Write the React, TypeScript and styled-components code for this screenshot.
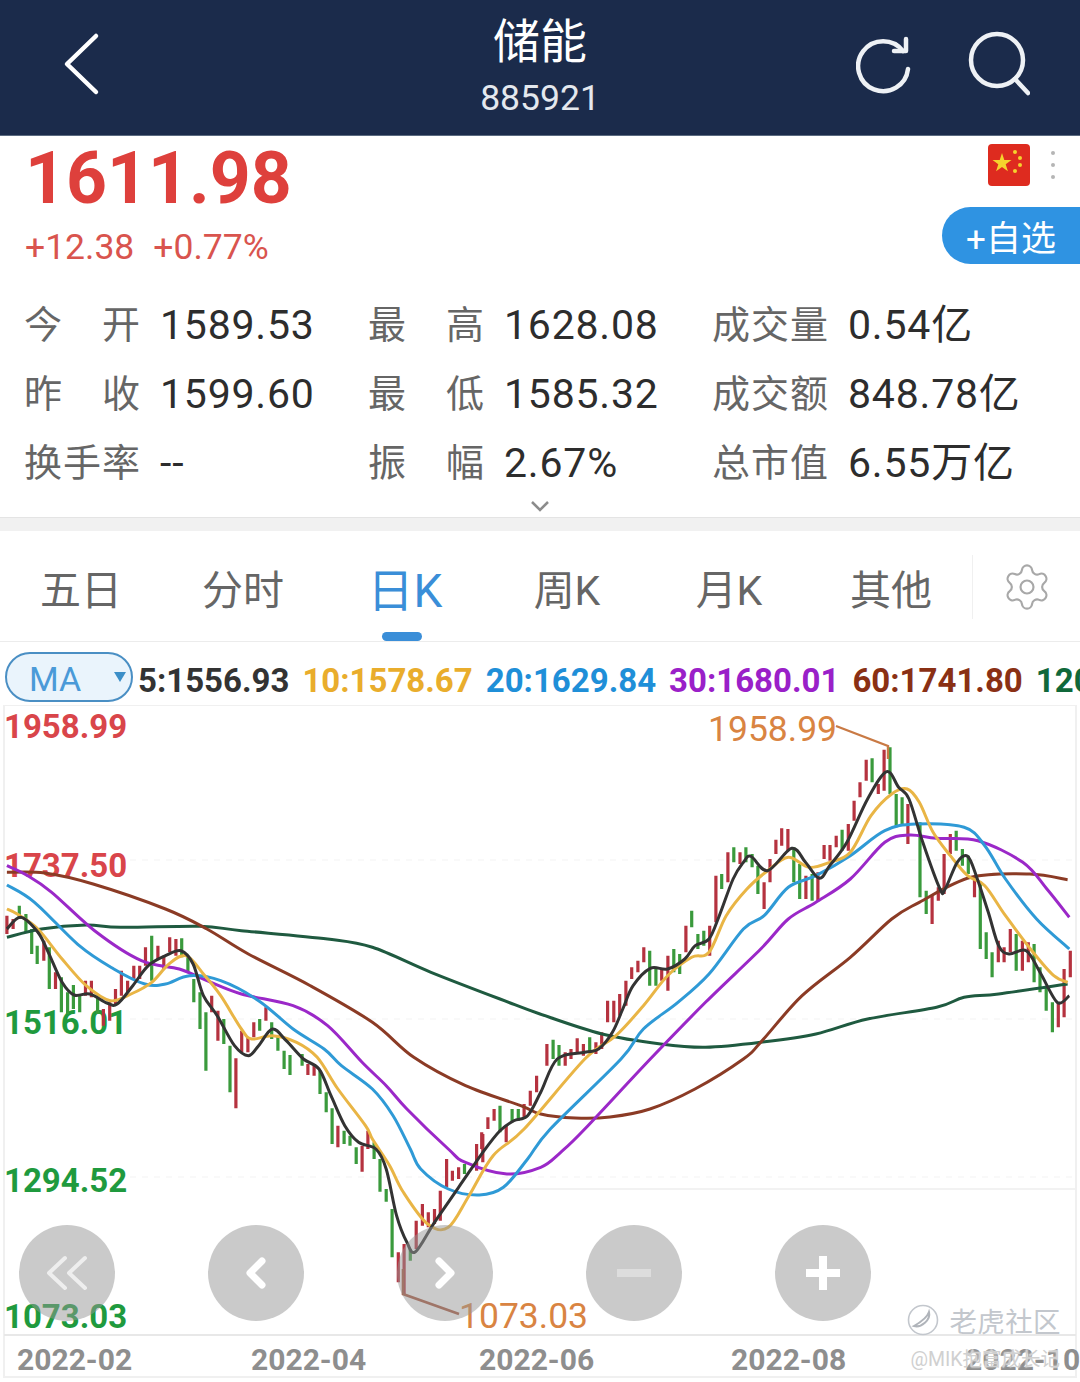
import React from 'react'
import styled, { createGlobalStyle } from 'styled-components'
import { Settings } from 'lucide-react'

const GlobalStyle = createGlobalStyle`
  html, body {
    margin: 0;
    padding: 0;
    background: #fff;
  }
  body {
    font-family: Roboto, "Noto Sans CJK SC", sans-serif;
  }
`

const Page = styled.div`
  width: 1080px;
  height: 1382px;
  overflow: hidden;
  display: flex;
  flex-direction: column;
  background: #fff;
`

const Header = styled.header`
  height: 136px;
  flex: none;
  background: #1b2b4b;
  border-bottom: 1px solid #5a6a80;
  box-sizing: border-box;
  display: grid;
  grid-template-columns: 1fr auto 1fr;
  align-items: center;
  padding: 0 50px 8px 60px;
  color: #fff;
`

const HeaderIcons = styled.div`
  display: flex;
  justify-content: flex-end;
  gap: 52px;
`

const TitleBlock = styled.div`
  align-self: start;
  text-align: center;
  margin-left: -10px;
  padding-top: 15px;
`

const Title = styled.div`
  font-size: 47px;
  line-height: 54px;
`

const Code = styled.div`
  font-size: 35.5px;
  line-height: 44px;
  margin-top: 7px;
  color: #e4e8ee;
`

const QuoteRow = styled.section`
  height: 134px;
  flex: none;
  display: flex;
  justify-content: space-between;
  box-sizing: border-box;
  padding-left: 25px;
`

const Price = styled.div`
  font-size: 71.5px;
  font-weight: 700;
  line-height: 84px;
  margin-top: 1px;
  color: #de403c;
`

const Change = styled.div`
  display: flex;
  gap: 19px;
  font-size: 35.5px;
  line-height: 44px;
  margin-top: 4px;
  color: #d9544e;
`

const QuoteSide = styled.div`
  display: flex;
  flex-direction: column;
  align-items: flex-end;
`

const FlagRow = styled.div`
  display: flex;
  align-items: center;
  gap: 21px;
  padding: 8px 25px 0 0;
`

const Dots = styled.div`
  display: flex;
  flex-direction: column;
  gap: 8px;

  > i {
    width: 4px;
    height: 4px;
    border-radius: 50%;
    background: #b5b5b5;
  }
`

const WatchButton = styled.button`
  width: 138px;
  height: 57px;
  margin-top: 21px;
  border: 0;
  padding: 0;
  border-radius: 29px 0 0 29px;
  background: #2f93e2;
  color: #fff;
  font: 400 35px Roboto, "Noto Sans CJK SC", sans-serif;
`

const Stats = styled.section`
  height: 248px;
  flex: none;
  box-sizing: border-box;
  padding: 20px 0 0 24px;
  display: grid;
  grid-template-columns: repeat(3, 344px);
  grid-auto-rows: 69px;
  position: relative;
  border-bottom: 1px solid #e4e4e4;
`

const Stat = styled.div`
  display: flex;
  align-items: center;
  gap: 20px;
`

const StatLabel = styled.span`
  width: 116px;
  font-size: 38px;
  line-height: 48px;
  color: #666;
  text-align: justify;
  text-align-last: justify;
`

const StatValue = styled.span`
  font-size: 41px;
  line-height: 48px;
  letter-spacing: 0.8px;
  color: #2d2d2d;
`

const MoreChevron = styled.svg`
  position: absolute;
  left: 530px;
  top: 230px;
`

const Band = styled.div`
  height: 13px;
  flex: none;
  background: #f1f1f1;
`

const Tabs = styled.nav`
  height: 111px;
  flex: none;
  box-sizing: border-box;
  display: flex;
  align-items: center;
  border-bottom: 1px solid #ececec;
`

const Tab = styled.div<{ $active?: boolean }>`
  width: 162px;
  height: 100%;
  position: relative;
  display: flex;
  align-items: center;
  justify-content: center;
  padding-top: 2px;
  box-sizing: border-box;
  font-size: ${({ $active }) => ($active ? '46px' : '41px')};
  color: ${({ $active }) => ($active ? '#3a8ed8' : '#666')};

  &::after {
    content: '';
    display: ${({ $active }) => ($active ? 'block' : 'none')};
    position: absolute;
    left: 58px;
    bottom: 0;
    width: 40px;
    height: 9px;
    border-radius: 5px;
    background: #3a8ed8;
  }
`

const GearCell = styled.div`
  flex: 1;
  display: flex;
  align-items: center;
  justify-content: center;
  height: 64px;
  margin-top: 2px;
  border-left: 1px solid #f0f0f0;
  color: #a8a8a8;
`

const IndicatorRow = styled.div`
  height: 63px;
  flex: none;
  box-sizing: border-box;
  display: flex;
  align-items: center;
  padding: 7px 0 0 5px;
  white-space: nowrap;
  overflow: hidden;
`

const MaPill = styled.div`
  flex: none;
  width: 128px;
  height: 50px;
  box-sizing: border-box;
  margin-right: 5px;
  padding: 4px 5px 0 22px;
  display: flex;
  align-items: center;
  justify-content: space-between;
  border: 2.5px solid #4a8fc4;
  border-radius: 25px;
  background: #eaf4fc;
  color: #4a9ad8;
  font-size: 34px;
`

const MaCaret = styled.span`
  width: 0;
  height: 0;
  margin-top: -4px;
  border-left: 6px solid transparent;
  border-right: 6px solid transparent;
  border-top: 10px solid #3c8fc8;
`

const MaValue = styled.span<{ $color: string }>`
  flex: none;
  margin: 6px 13px 0 0;
  font-size: 33px;
  font-weight: 700;
  color: ${({ $color }) => $color};
`

const ChartArea = styled.section`
  position: relative;
  flex: 1;
  min-height: 0;
`

const ChartSvg = styled.svg`
  display: block;
`

const PriceText = styled.text`
  font-size: 33px;
  font-weight: 700;
`

const AnnotationText = styled.text`
  font-size: 35.5px;
  fill: #d98442;
`

const DateText = styled.text`
  font-size: 30px;
  font-weight: 700;
  fill: #8e8e8e;
`

const Controls = styled.div`
  position: absolute;
  left: 19px;
  top: 520px;
  display: flex;
  gap: 93px;
`

const ControlButton = styled.div`
  width: 96px;
  height: 96px;
  border-radius: 50%;
  background: rgba(150, 150, 150, 0.5);
  display: flex;
  align-items: center;
  justify-content: center;
`

const WatermarkLogo = styled.div`
  position: absolute;
  right: 19px;
  top: 595px;
  display: flex;
  align-items: center;
  gap: 10px;
  font-size: 27.5px;
  letter-spacing: 0.4px;
  color: #c3c7cd;
`

const WatermarkUser = styled.div`
  position: absolute;
  right: 20px;
  top: 638px;
  font-size: 19.5px;
  color: #d0d0d0;
  text-shadow: 0 0 2px #fff;
`

type Pt = [number, number]
type Candle = [number, number, number]

// traced off 3x crops, so the crop origin and scale map them back to the page
const crop = (pts: Pt[], ox: number, oy: number): Pt[] => pts.map(([x, y]) => [ox + x / 2.9, oy + y / 3])

const smooth = (p: Pt[]) => {
  let d = `M${p[0][0].toFixed(1)} ${p[0][1].toFixed(1)}`
  for (let i = 0; i < p.length - 1; i++) {
    const a = p[Math.max(i - 1, 0)]
    const b = p[i]
    const c = p[i + 1]
    const e = p[Math.min(i + 2, p.length - 1)]
    const c1x = b[0] + (c[0] - a[0]) / 6
    const c1y = b[1] + (c[1] - a[1]) / 6
    const c2x = c[0] - (e[0] - b[0]) / 6
    const c2y = c[1] - (e[1] - b[1]) / 6
    d += `C${c1x.toFixed(1)} ${c1y.toFixed(1)} ${c2x.toFixed(1)} ${c2y.toFixed(1)} ${c[0].toFixed(1)} ${c[1].toFixed(1)}`
  }
  return d
}

const ma120: Pt[] = [
  ...crop([[20, 265], [120, 240], [250, 228], [350, 235], [580, 232], [700, 245], [950, 270], [1080, 295], [1250, 370], [1450, 450]], 0, 850),
  ...crop([[0, 885], [180, 945], [350, 975], [480, 985], [640, 970], [800, 945], [950, 900], [1150, 865], [1230, 835], [1330, 825], [1530, 795]], 540, 720),
]

const ma60: Pt[] = [
  ...crop([[20, 70], [130, 72], [270, 105], [480, 180], [600, 240], [720, 315], [900, 410], [1080, 520], [1200, 625], [1350, 710], [1510, 770], [1568, 795]], 0, 850),
  [575, 1119], [610, 1118], [650, 1110], [695, 1090],
  ...crop([[590, 1020], [640, 970], [760, 830], [900, 715], [1020, 600], [1100, 550], [1250, 475], [1420, 465], [1530, 482]], 540, 720),
]

const ma30: Pt[] = [
  ...crop([[20, 50], [80, 80], [150, 130], [280, 250], [410, 335], [520, 360], [600, 395], [700, 435], [850, 470], [950, 530], [1050, 640], [1120, 710], [1180, 780], [1300, 900]], 0, 850),
  ...crop([[1350, 100], [1470, 135], [1568, 115]], 0, 1130),
  ...crop([[60, 70], [130, 0]], 540, 1130),
  ...crop([[320, 1020], [480, 850], [640, 690], [720, 600], [800, 550], [900, 480], [1000, 370], [1070, 348], [1150, 358], [1270, 365], [1400, 430], [1470, 510], [1535, 595]], 540, 720),
]

const ma20: Pt[] = [
  ...crop([[20, 108], [100, 160], [230, 290], [330, 360], [420, 405], [480, 405], [550, 380], [640, 395], [750, 455], [850, 540], [940, 600], [990, 650], [1080, 720], [1140, 800], [1190, 900]], 0, 850),
  ...crop([[1220, 120], [1300, 180], [1390, 198], [1460, 175], [1530, 90]], 0, 1130),
  ...crop([[30, 0]], 540, 1130),
  ...crop([[235, 1020], [300, 930], [400, 850], [490, 765], [590, 630], [650, 590], [720, 505], [800, 470], [900, 410], [1000, 335], [1090, 315], [1230, 325], [1290, 380], [1350, 480], [1440, 600], [1535, 690]], 540, 720),
]

const ma10: Pt[] = [
  ...crop([[20, 180], [50, 195], [110, 240], [180, 330], [250, 410], [320, 455], [380, 435], [440, 400], [490, 345], [540, 320], [590, 375], [640, 440], [700, 540], [730, 570], [790, 560], [860, 580], [920, 625], [980, 720], [1060, 830]], 0, 850),
  ...crop([[1080, 30], [1130, 110], [1170, 190], [1240, 285], [1300, 295], [1360, 200], [1430, 80], [1520, 0]], 0, 1130),
  ...crop([[130, 1020], [220, 950], [300, 860], [370, 770], [440, 715], [490, 700], [540, 590], [600, 510], [660, 455], [720, 415], [780, 445], [840, 430], [900, 400], [960, 290], [1020, 225], [1065, 210], [1100, 250], [1140, 340], [1190, 410], [1240, 470], [1290, 500], [1350, 590], [1430, 700], [1490, 770], [1530, 790]], 540, 720),
]

const ma5: Pt[] = [
  ...crop([[20, 240], [60, 205], [110, 250], [140, 310], [180, 400], [215, 438], [260, 435], [310, 462], [340, 465], [385, 410], [430, 350], [480, 320], [525, 305], [560, 345], [590, 440], [630, 500], [680, 590], [720, 620], [750, 590], [790, 540], [830, 575], [880, 630], [925, 660], [960, 740], [1000, 830], [1040, 880]], 0, 850),
  ...crop([[1090, 60], [1120, 120], [1150, 260], [1180, 340], [1205, 368], [1260, 280], [1330, 175], [1400, 70]], 0, 1130),
  ...crop([[1450, 845], [1490, 815], [1530, 800], [1568, 730]], 0, 850),
  ...crop([[50, 1020], [130, 1000], [170, 990], [210, 940], [240, 870], [270, 800], [320, 748], [370, 750], [420, 720], [450, 680], [490, 660], [520, 590], [560, 480], [590, 430], [612, 412], [660, 455], [730, 388], [770, 430], [810, 478], [840, 440], [890, 370], [950, 240], [1005, 158], [1040, 205], [1070, 240], [1110, 370], [1160, 510], [1175, 510], [1210, 430], [1240, 412], [1265, 470], [1300, 580], [1330, 680], [1360, 705], [1410, 695], [1450, 760], [1500, 850], [1535, 830]], 540, 720),
]

const lines: { d: string; color: string }[] = [
  { d: smooth(ma120), color: '#1f5a40' },
  { d: smooth(ma60), color: '#8b3b25' },
  { d: smooth(ma30), color: '#9b28c8' },
  { d: smooth(ma20), color: '#2f9ad6' },
  { d: smooth(ma10), color: '#e9b545' },
  { d: smooth(ma5), color: '#333333' },
]

const redLeft: Candle[] = [
  [20, 200, 255], [38, 210, 240], [127, 275, 335], [161, 370, 420], [248, 395, 440], [265, 395, 445], [300, 480, 530], [318, 460, 515], [335, 420, 465], [352, 365, 440], [370, 395, 430], [388, 350, 390], [405, 350, 390], [422, 295, 350], [458, 290, 330], [475, 320, 360], [492, 265, 310], [510, 270, 320], [614, 440, 490], [632, 485, 575], [684, 628, 778], [701, 545, 610], [719, 565, 610], [736, 520, 565], [771, 475, 515], [893, 645, 678], [911, 650, 680], [980, 830, 895], [1067, 845, 900], [1415, 805, 840], [1433, 780, 815], [1468, 830, 880], [1520, 765, 810], [1538, 725, 770], [1556, 680, 730], [1397, 850, 900],
]

const greenLeft: Candle[] = [
  [56, 170, 210], [75, 195, 250], [92, 240, 315], [108, 290, 345], [143, 295, 420], [178, 385, 490], [196, 430, 495], [213, 408, 480], [231, 440, 490], [283, 445, 495], [440, 260, 395], [527, 268, 325], [545, 320, 370], [562, 390, 460], [580, 430, 540], [597, 490, 665], [649, 510, 585], [667, 590, 730], [753, 510, 545], [788, 520, 570], [806, 560, 605], [824, 605, 660], [841, 618, 678], [876, 615, 650], [928, 665, 735], [946, 730, 790], [963, 778, 885], [998, 845, 885], [1015, 860, 890], [1450, 770, 850], [1485, 780, 820], [1503, 780, 815],
]

const redBottom: Candle[] = [
  [1050, 50, 128], [1155, 370, 460], [1172, 345, 495], [1207, 275, 360], [1225, 225, 290], [1242, 250, 295], [1260, 240, 285], [1277, 185, 275], [1295, 90, 175], [1312, 125, 155], [1330, 115, 150], [1382, 45, 125], [1400, 15, 100],
]

const greenBottom: Candle[] = [
  [1033, 55, 105], [1085, 40, 90], [1102, 90, 188], [1120, 180, 218], [1137, 240, 385], [1190, 360, 395], [1347, 105, 135],
]

const redRight: Candle[] = [
  [20, 975, 1040], [73, 1000, 1040], [90, 990, 1020], [108, 958, 1005], [126, 975, 1010], [162, 970, 1005], [179, 940, 990], [196, 845, 910], [214, 845, 910], [231, 825, 890], [249, 785, 860], [266, 745, 780], [284, 725, 760], [301, 685, 730], [353, 750, 785], [371, 710, 815], [423, 620, 700], [492, 620, 710], [510, 470, 610], [545, 400, 490], [580, 400, 435], [650, 490, 570], [667, 420, 490], [684, 362, 405], [701, 328, 380], [719, 330, 395], [771, 470, 540], [806, 460, 545], [824, 378, 420], [841, 378, 425], [859, 350, 385], [894, 315, 395], [911, 245, 305], [928, 190, 235], [946, 122, 185], [981, 195, 225], [998, 92, 215], [1067, 255, 375], [1137, 530, 615], [1155, 505, 545], [1172, 405, 525], [1190, 345, 405], [1260, 470, 535], [1329, 665, 730], [1346, 685, 730], [1364, 630, 700], [1399, 665, 755], [1416, 670, 730], [1503, 850, 925], [1520, 750, 895], [1538, 695, 775],
]

const greenRight: Candle[] = [
  [38, 962, 1020], [55, 978, 1040], [144, 955, 1000], [318, 695, 800], [336, 745, 800], [388, 690, 760], [405, 705, 765], [440, 575, 625], [458, 645, 690], [475, 635, 680], [527, 465, 510], [562, 385, 430], [597, 385, 430], [615, 405, 445], [632, 440, 525], [736, 385, 490], [753, 435, 540], [789, 465, 545], [876, 332, 395], [963, 118, 190], [1015, 85, 225], [1033, 225, 325], [1050, 235, 315], [1102, 310, 535], [1120, 515, 585], [1207, 335, 395], [1225, 390, 440], [1242, 410, 465], [1277, 490, 690], [1294, 640, 720], [1311, 700, 775], [1381, 645, 755], [1433, 675, 790], [1450, 745, 820], [1468, 800, 875], [1486, 850, 940],
]

const candleSegments = (list: Candle[], ox: number, oy: number) =>
  list.map(([x, t, b]) => `M${(ox + x / 2.9).toFixed(1)} ${(oy + t / 3).toFixed(1)}V${(oy + b / 3).toFixed(1)}`).join('')

const redCandles = candleSegments(redLeft, 0, 850) + candleSegments(redBottom, 0, 1130) + candleSegments(redRight, 540, 720)
const greenCandles = candleSegments(greenLeft, 0, 850) + candleSegments(greenBottom, 0, 1130) + candleSegments(greenRight, 540, 720)

const stats = [
  ['今开', '1589.53'],
  ['最高', '1628.08'],
  ['成交量', '0.54亿'],
  ['昨收', '1599.60'],
  ['最低', '1585.32'],
  ['成交额', '848.78亿'],
  ['换手率', '--'],
  ['振幅', '2.67%'],
  ['总市值', '6.55万亿'],
]

const tabs = ['五日', '分时', '日K', '周K', '月K', '其他']

const maValues = [
  ['5:1556.93', '#333333'],
  ['10:1578.67', '#e9ad2c'],
  ['20:1629.84', '#1f8fd8'],
  ['30:1680.01', '#9a20c8'],
  ['60:1741.80', '#8a3014'],
  ['120:1790.22', '#10683a'],
]

const priceLabels: [string, number, string][] = [
  ['1958.99', 739, '#d9454a'],
  ['1737.50', 878, '#d9454a'],
  ['1516.01', 1035, '#1f9a3e'],
  ['1294.52', 1193, '#1f9a3e'],
  ['1073.03', 1329, '#1f9a3e'],
]

const dates: [string, number][] = [
  ['2022-02', 17],
  ['2022-04', 251],
  ['2022-06', 479],
  ['2022-08', 731],
  ['2022-10', 965],
]

const stroke = { fill: 'none', stroke: '#fff', strokeLinecap: 'round', strokeLinejoin: 'round' } as const

export default function App() {
  return (
    <Page>
      <GlobalStyle />
      <Header>
        <svg width="44" height="64" viewBox="0 0 44 64">
          <path d="M36 4 L7 32 L36 60" {...stroke} strokeWidth="4.5" />
        </svg>
        <TitleBlock>
          <Title>储能</Title>
          <Code>885921</Code>
        </TitleBlock>
        <HeaderIcons>
          <svg width="60" height="64" viewBox="0 0 60 64">
            <path d="M47 20 A25 25 0 1 0 52 38" {...stroke} stroke="#eef1f5" strokeWidth="4.5" />
            <path d="M38 20 L50 20 L50 8" {...stroke} stroke="#eef1f5" strokeWidth="4.5" />
          </svg>
          <svg width="62" height="66" viewBox="0 0 62 66">
            <circle cx="29" cy="29" r="26" {...stroke} stroke="#eef1f5" strokeWidth="4.5" />
            <path d="M47 48 L60 62" {...stroke} stroke="#eef1f5" strokeWidth="4.5" />
          </svg>
        </HeaderIcons>
      </Header>

      <QuoteRow>
        <div>
          <Price>1611.98</Price>
          <Change>
            <span>+12.38</span>
            <span>+0.77%</span>
          </Change>
        </div>
        <QuoteSide>
          <FlagRow>
            <svg width="42" height="42" viewBox="0 0 42 42">
              <rect width="42" height="42" rx="4" fill="#de2b1f" />
              <path d="M14 9 L16.3 16 L23.5 16 L17.7 20.3 L19.9 27.3 L14 23 L8.1 27.3 L10.3 20.3 L4.5 16 L11.7 16 Z" fill="#f5d32d" />
              <circle cx="27" cy="8" r="2" fill="#f5d32d" />
              <circle cx="32" cy="14" r="2" fill="#f5d32d" />
              <circle cx="32" cy="21" r="2" fill="#f5d32d" />
              <circle cx="27" cy="27" r="2" fill="#f5d32d" />
            </svg>
            <Dots>
              <i />
              <i />
              <i />
            </Dots>
          </FlagRow>
          <WatchButton>+自选</WatchButton>
        </QuoteSide>
      </QuoteRow>

      <Stats>
        {stats.map(([label, value]) => (
          <Stat key={label}>
            <StatLabel>{label}</StatLabel>
            <StatValue>{value}</StatValue>
          </Stat>
        ))}
        <MoreChevron width="20" height="12" viewBox="0 0 20 12">
          <path d="M2 2 L10 10 L18 2" fill="none" stroke="#8c8c8c" strokeWidth="2.5" />
        </MoreChevron>
      </Stats>
      <Band />

      <Tabs>
        {tabs.map(tab => (
          <Tab key={tab} $active={tab === '日K'}>
            {tab}
          </Tab>
        ))}
        <GearCell>
          <Settings size={52} strokeWidth={1} />
        </GearCell>
      </Tabs>

      <IndicatorRow>
        <MaPill>
          MA
          <MaCaret />
        </MaPill>
        {maValues.map(([text, color]) => (
          <MaValue key={text} $color={color}>
            {text}
          </MaValue>
        ))}
      </IndicatorRow>

      <ChartArea>
        <ChartSvg width="1080" height="676" viewBox="0 706 1080 676">
          <path d="M4 706 H1076 V1336 M4 706 V1378 H1076 V1336" fill="none" stroke="#f0f0f0" strokeWidth="2" />
          <path d="M4 1336 H1076" stroke="#e8e8e8" strokeWidth="2" />
          <path d="M130 861 H1075 M130 1020 H1075 M130 1178 H1075" stroke="#f7f7f7" strokeWidth="1.5" strokeDasharray="6 6" />
          <path d="M500 1190 H1075" stroke="#f2f2f2" strokeWidth="2" />
          {priceLabels.map(([text, y, color]) => (
            <PriceText key={text} x="4" y={y} fill={color}>
              {text}
            </PriceText>
          ))}
          <path d={greenCandles} stroke="#3a9a3c" strokeWidth="3.2" fill="none" />
          <path d={redCandles} stroke="#b5323f" strokeWidth="3.2" fill="none" />
          {lines.map(line => (
            <path key={line.color} d={line.d} fill="none" stroke={line.color} strokeWidth="3" />
          ))}
          <path d="M836 727 L888 747 V760" fill="none" stroke="#c97a45" strokeWidth="2.4" />
          <path d="M403 1270 V1295 L459 1315" fill="none" stroke="#a8553a" strokeWidth="2.6" />
          <AnnotationText x="708" y="742">1958.99</AnnotationText>
          <AnnotationText x="459" y="1329">1073.03</AnnotationText>
          {dates.map(([text, x]) => (
            <DateText key={text} x={x} y="1371">
              {text}
            </DateText>
          ))}
        </ChartSvg>

        <Controls>
          <ControlButton>
            <svg width="44" height="36" viewBox="0 0 44 36">
              <path d="M20 3 L4 18 L20 33 M40 3 L24 18 L40 33" {...stroke} stroke="#eeeeee" strokeWidth="4" />
            </svg>
          </ControlButton>
          <ControlButton>
            <svg width="24" height="36" viewBox="0 0 24 36">
              <path d="M18 6 L6 18 L18 30" {...stroke} strokeWidth="7" />
            </svg>
          </ControlButton>
          <ControlButton>
            <svg width="24" height="36" viewBox="0 0 24 36">
              <path d="M6 6 L18 18 L6 30" {...stroke} strokeWidth="7" />
            </svg>
          </ControlButton>
          <ControlButton>
            <svg width="34" height="10" viewBox="0 0 34 10">
              <path d="M0 5 H34" stroke="#dddddd" strokeWidth="8" />
            </svg>
          </ControlButton>
          <ControlButton>
            <svg width="34" height="34" viewBox="0 0 34 34">
              <path d="M0 17 H34 M17 0 V34" stroke="#fff" strokeWidth="8" />
            </svg>
          </ControlButton>
        </Controls>

        <WatermarkLogo>
          <svg width="32" height="32" viewBox="0 0 32 32">
            <circle cx="16" cy="16" r="14.5" fill="none" stroke="#c3c7cd" strokeWidth="1.6" />
            <path d="M7 22 C14 24 24 16 22 8 C20 14 14 18 7 22 Z" fill="none" stroke="#b0b4ba" strokeWidth="2" />
          </svg>
          老虎社区
        </WatermarkLogo>
        <WatermarkUser>@MIK抱富成长记</WatermarkUser>
      </ChartArea>
    </Page>
  )
}
